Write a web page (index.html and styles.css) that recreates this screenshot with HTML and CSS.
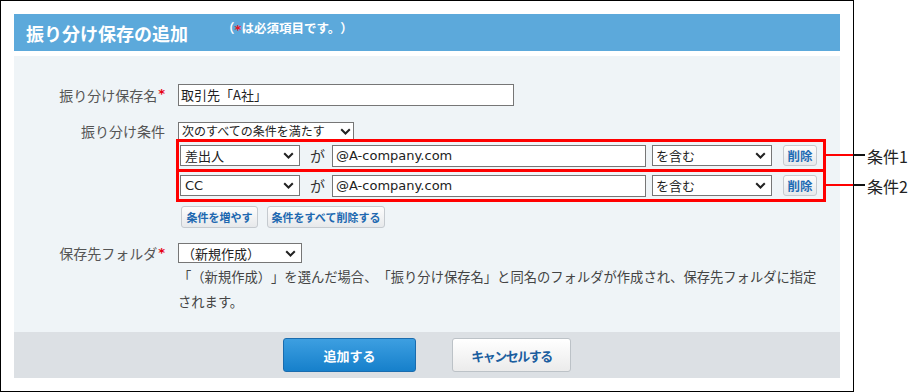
FILE: index.html
```html
<!DOCTYPE html>
<html lang="ja">
<head>
<meta charset="utf-8">
<title>振り分け保存の追加</title>
<link rel="stylesheet" href="styles.css">
</head>
<body>
<div class="page">
  <div class="frame">
    <div class="titlebar">
      <span class="title">振り分け保存の追加</span>
      <span class="note">（<span class="req">*</span>は必須項目です。）</span>
    </div>
    <div class="panel">
      <div class="row row-name">
        <div class="label lh22">振り分け保存名<span class="req">*</span></div>
        <div class="field">
          <div class="input w-name">取引先「A社」</div>
        </div>
      </div>
      <div class="row row-cond">
        <div class="label lh18">振り分け条件</div>
        <div class="field">
          <div class="select sel-all"><span>次のすべての条件を満たす</span><svg class="chev" width="11" height="7" viewBox="0 0 11 7"><path d="M1.2 1.2 L5.5 5.5 L9.8 1.2" fill="none" stroke="#222" stroke-width="2"/></svg></div>
          <div class="conds">
            <div class="cond">
              <div class="select sel-who"><span>差出人</span><svg class="chev" width="11" height="7" viewBox="0 0 11 7"><path d="M1.2 1.2 L5.5 5.5 L9.8 1.2" fill="none" stroke="#222" stroke-width="2"/></svg></div>
              <span class="ga">が</span>
              <div class="input latin w-val">@A-company.com</div>
              <div class="select sel-op"><span>を含む</span><svg class="chev" width="11" height="7" viewBox="0 0 11 7"><path d="M1.2 1.2 L5.5 5.5 L9.8 1.2" fill="none" stroke="#222" stroke-width="2"/></svg></div>
              <div class="del">削除</div>
            </div>
            <div class="cond">
              <div class="select sel-who latin"><span>CC</span><svg class="chev" width="11" height="7" viewBox="0 0 11 7"><path d="M1.2 1.2 L5.5 5.5 L9.8 1.2" fill="none" stroke="#222" stroke-width="2"/></svg></div>
              <span class="ga">が</span>
              <div class="input latin w-val">@A-company.com</div>
              <div class="select sel-op"><span>を含む</span><svg class="chev" width="11" height="7" viewBox="0 0 11 7"><path d="M1.2 1.2 L5.5 5.5 L9.8 1.2" fill="none" stroke="#222" stroke-width="2"/></svg></div>
              <div class="del">削除</div>
            </div>
          </div>
          <div class="btns">
            <div class="sbtn sbtn-add">条件を増やす</div>
            <div class="sbtn sbtn-clear">条件をすべて削除する</div>
          </div>
        </div>
      </div>
      <div class="row row-folder">
        <div class="label lh20">保存先フォルダ<span class="req">*</span></div>
        <div class="field">
          <div class="select sel-folder"><span>（新規作成）</span><svg class="chev" width="11" height="7" viewBox="0 0 11 7"><path d="M1.2 1.2 L5.5 5.5 L9.8 1.2" fill="none" stroke="#222" stroke-width="2"/></svg></div>
          <p class="desc">「（新規作成）」を選んだ場合、「振り分け保存名」と同名のフォルダが作成され、保存先フォルダに指定されます。</p>
        </div>
      </div>
    </div>
    <div class="footer">
      <div class="btn btn-primary">追加する</div>
      <div class="btn btn-secondary">キャンセルする</div>
    </div>
  </div>
  <div class="callout c1"><span class="stub-r"></span><span class="stub-k"></span><span class="callout-text">条件1</span></div>
  <div class="callout c2"><span class="stub-r"></span><span class="stub-k"></span><span class="callout-text">条件2</span></div>
</div>
</body>
</html>
```
FILE: styles.css
```css
body {
  margin: 0;
  background: #fff;
  font-family: "Noto Sans CJK JP", sans-serif;
  text-spacing-trim: space-all;
}
.page {
  position: relative;
  width: 920px;
  height: 392px;
}
.frame {
  box-sizing: border-box;
  width: 854px;
  height: 392px;
  border: 1px solid #000;
  padding: 13px;
}
.titlebar {
  height: 37px;
  background: #5ca9db;
  display: flex;
  align-items: center;
  padding-left: 12px;
  color: #fff;
  font-weight: bold;
}
.title {
  font-size: 18px;
  line-height: 1;
}
.note {
  font-size: 12.5px;
  line-height: 1;
  margin-left: 34px;
  margin-bottom: 9px;
}
.note .req {
  color: #e8141e;
  font-family: "DejaVu Sans", sans-serif;
  font-size: 13px;
  font-weight: bold;
  display: inline-block;
  width: 7px;
  text-align: center;
  vertical-align: top;
  position: relative;
  top: 1px;
}
.panel {
  margin-top: 5px;
  height: 276px;
  box-sizing: border-box;
  padding-top: 28px;
  background: #eff4f7;
}
.row {
  display: flex;
  align-items: flex-start;
}
.row-cond {
  margin-top: 16px;
}
.row-folder {
  margin-top: 15px;
}
.label {
  width: 164px;
  flex: none;
  box-sizing: border-box;
  padding-right: 13px;
  text-align: right;
  font-size: 14px;
  color: #555;
  white-space: nowrap;
}
.lh22 { line-height: 22px; }
.lh18 { line-height: 18px; }
.lh20 { line-height: 20px; }
.label .req {
  color: #e60012;
  font-family: "DejaVu Sans", sans-serif;
  font-size: 13px;
  font-weight: bold;
  line-height: 1;
  vertical-align: top;
  position: relative;
  top: 3px;
  margin-left: 1px;
}
.field {
  display: flex;
  flex-direction: column;
  align-items: flex-start;
}
.input {
  box-sizing: border-box;
  height: 22px;
  border: 1px solid #767676;
  background: #fff;
  padding-left: 2px;
  font-size: 13px;
  line-height: 20px;
  color: #222;
  white-space: nowrap;
}
.latin {
  font-family: "DejaVu Sans", "Noto Sans CJK JP", sans-serif;
}
.w-name {
  width: 336px;
}
.select {
  box-sizing: border-box;
  display: flex;
  align-items: center;
  justify-content: space-between;
  border: 1px solid #767676;
  background: #fff;
  color: #222;
  font-size: 13px;
  padding: 0 5px 0 3px;
  white-space: nowrap;
}
.chev {
  flex: none;
}
.sel-all {
  width: 176px;
  height: 18px;
  font-size: 12px;
  line-height: 16px;
  padding-right: 2px;
}
.conds {
  box-sizing: border-box;
  width: 650px;
  margin-left: -2px;
  margin-top: -1px;
  border: 3px solid #f00;
}
.cond {
  display: flex;
  align-items: center;
  height: 27px;
  padding-left: 1px;
}
.cond + .cond {
  border-top: 3px solid #f00;
}
.sel-who {
  width: 120px;
  height: 21px;
  padding-left: 4px;
}
.ga {
  margin-left: 10px;
  width: 16px;
  font-size: 15px;
  line-height: 1;
  color: #333;
}
.w-val {
  margin-left: 6px;
  width: 314px;
  padding-left: 3px;
}
.sel-op {
  margin-left: 6px;
  width: 120px;
  height: 21px;
}
.del {
  margin-left: 11px;
  box-sizing: border-box;
  width: 34px;
  height: 21px;
  border: 1px solid #c5cacf;
  border-radius: 3px;
  background: linear-gradient(#fdfdfd, #e7e9eb);
  color: #1f6cb4;
  font-weight: bold;
  font-size: 12.5px;
  display: flex;
  align-items: center;
  justify-content: center;
}
.btns {
  display: flex;
  gap: 9px;
  margin-top: 4px;
  margin-left: 3px;
}
.sbtn {
  box-sizing: border-box;
  height: 22px;
  border: 1px solid #c5cacf;
  border-radius: 3px;
  background: linear-gradient(#fdfdfd, #e7e9eb);
  color: #2068b0;
  font-weight: bold;
  font-size: 11px;
  display: flex;
  align-items: center;
  justify-content: center;
}
.sbtn-add { width: 77px; }
.sbtn-clear { width: 118px; }
.sel-folder {
  width: 124px;
  height: 20px;
}
.desc {
  margin: 1px 0 0;
  width: 646px;
  font-size: 13.3px;
  line-height: 25px;
  color: #444;
}
.footer {
  height: 46px;
  background: #dce0e4;
  display: flex;
  justify-content: center;
  align-items: center;
  gap: 36px;
}
.btn {
  box-sizing: border-box;
  height: 34px;
  border-radius: 3px;
  font-weight: bold;
  font-size: 13px;
  display: flex;
  align-items: center;
  justify-content: center;
}
.btn-primary {
  width: 133px;
  border: 1px solid #1a6cae;
  background: linear-gradient(#3d9fe1, #1680cb);
  color: #fff;
}
.btn-secondary {
  width: 119px;
  border: 1px solid #bcc2c7;
  background: linear-gradient(#ffffff, #ebebeb);
  color: #1b5e9f;
  letter-spacing: -1.5px;
}
.callout {
  position: absolute;
  left: 826px;
  height: 20px;
  display: flex;
  align-items: center;
}
.c1 { top: 145px; }
.c2 { top: 175px; }
.stub-r {
  width: 27px;
  height: 2px;
  background: #f00;
}
.stub-k {
  width: 12px;
  height: 2px;
  background: #111;
}
.callout-text {
  margin-left: 2px;
  font-size: 16px;
  line-height: 20px;
  padding-top: 2px;
  color: #222;
}
```
